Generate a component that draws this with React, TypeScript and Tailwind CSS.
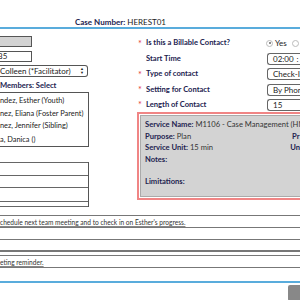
const navy = "text-[#22224f]";

function Label({ text, req }: { text: string; req?: boolean }) {
  return (
    <div className="flex items-center h-[16px] whitespace-nowrap">
      <span className="w-[8px] text-[#e23b3b] text-[9px] leading-none">{req ? "*" : ""}</span>
      <span className={`font-bold text-[7.6px] ${navy}`}>{text}</span>
    </div>
  );
}

function Box({ children }: { children?: React.ReactNode }) {
  return (
    <div className="h-[12px] w-[48px] shrink-0 border border-[#666] rounded-l-[3px] border-r-0 flex items-center pl-[5px] text-[8px] text-[#222] whitespace-nowrap overflow-hidden">
      {children}
    </div>
  );
}

export default function App() {
  return (
    <div className="w-[300px] h-[300px] overflow-hidden bg-white relative" style={{ fontFamily: "Lato, 'Open Sans', sans-serif" }}>
      <div className="pt-[17px] pl-[75px] h-[27px] text-[8px] leading-[10px] text-[#222] whitespace-nowrap">
        <span className={`font-bold ${navy}`}>Case Number:</span> HEREST01
      </div>
      <div className="h-[2px] bg-[#59acdc]" />

      <div className="flex">
        {/* left column */}
        <div className="w-[138px] shrink-0">
          <div className="mt-[7px] h-[11px] w-[32px] bg-[#d3d3d3] border border-[#555] border-l-0" />
          <div className="mt-[4px] h-[11px] w-[32px] border border-[#555] border-l-0 text-[8px] leading-[9px] text-[#222] overflow-hidden whitespace-nowrap">
            <span className="-ml-[2px]">35</span>
          </div>
          <div className="mt-[3px] h-[12px] w-[88px] border border-[#555] border-l-0 rounded-r-[3px] flex items-center justify-between pr-[3px] text-[8px] text-[#222] whitespace-nowrap">
            <span>Colleen (*Facilitator)</span>
            <span className="flex flex-col text-[4px] leading-[4px]">
              <span>▲</span>
              <span>▼</span>
            </span>
          </div>
          <div className={`mt-[2px] h-[13px] flex items-center font-bold text-[7.6px] ${navy} whitespace-nowrap`}>Members: Select</div>
          <div className="h-[55px] w-[89px] border border-[#555] border-l-0 pt-[2px] text-[7.4px] text-[#222] leading-[12.5px] whitespace-nowrap overflow-hidden">
            <div>ndez, Esther (Youth)</div>
            <div>nez, Eliana (Foster Parent)</div>
            <div>nez, Jennifer (Sibling)</div>
            <div className="mt-[1px]">a, Danica ()</div>
          </div>
          <div className="mt-[15px] w-[89px] border-r border-[#555]">
            <div className="h-[13px] border-t border-[#666]" />
            <div className="h-[12px] border-t border-[#666]" />
            <div className="h-[14px] border-t border-[#666]" />
            <div className="h-[6px] border-t border-b border-[#666]" />
          </div>
        </div>

        {/* right column */}
        <div className="flex-1 min-w-0">
          <div className="flex mt-[6px] h-[16px] items-center">
            <div className="w-[128px] shrink-0"><Label text="Is this a Billable Contact?" req /></div>
            <div className="flex items-center text-[8px] text-[#222] whitespace-nowrap">
              <span className="w-[7px] h-[7px] rounded-full border border-[#bbb] flex items-center justify-center">
                <span className="w-[2px] h-[2px] rounded-full bg-[#666]" />
              </span>
              <span className="ml-[2px]">Yes</span>
              <span className="ml-[5px] w-[7px] h-[7px] shrink-0 rounded-full border border-[#bbb]" />
            </div>
          </div>
          <div className="flex items-center h-[14px] mt-[1px]">
            <div className="w-[129px] shrink-0"><Label text="Start Time" /></div>
            <Box>02:00<span className="ml-[3px]">:</span></Box>
          </div>
          <div className="flex items-center h-[14px] mt-[1px]">
            <div className="w-[129px] shrink-0"><Label text="Type of contact" req /></div>
            <Box>Check-In</Box>
          </div>
          <div className="flex items-center h-[15px] mt-[1px]">
            <div className="w-[129px] shrink-0"><Label text="Setting for Contact" req /></div>
            <Box>By Phone</Box>
          </div>
          <div className="flex items-center h-[15px]">
            <div className="w-[129px] shrink-0"><Label text="Length of Contact" req /></div>
            <Box>15</Box>
          </div>
          <div className="-ml-[1px] h-[88px] border-2 border-r-0 border-[#f08585] p-[1px] pr-0">
            <div className="h-full bg-[#d3d3d3] border border-[#aaa] border-r-0 pl-[4px] pt-[3px] text-[7.6px] text-[#333] leading-[11.5px] whitespace-nowrap overflow-hidden">
              <div><span className={`font-bold ${navy}`}>Service Name:</span> M1106 - Case Management (HM)</div>
              <div className="flex"><span className="w-[147px]"><span className={`font-bold ${navy}`}>Purpose:</span> Plan</span><span className={`font-bold ${navy}`}>Pr</span></div>
              <div className="flex"><span className="w-[147px]"><span className={`font-bold ${navy}`}>Service Unit:</span> 15 min</span><span className={`font-bold ${navy}`}>Un</span></div>
              <div className={`font-bold ${navy}`}>Notes:</div>
              <div className={`mt-[11px] font-bold ${navy}`}>Limitations:</div>
            </div>
          </div>
        </div>
      </div>

      <div className="mt-[8px] h-[13px] border-t border-b border-[#777] text-[6.6px] leading-[12px] text-[#333] underline decoration-[#888] whitespace-nowrap overflow-hidden">
        chedule next team meeting and to check in on Esther's progress.
      </div>
      <div className="mt-[11px] h-[13px] border-t border-b-2 border-[#777]" />
      <div className="mt-[3px] h-[13px] border-t border-b border-[#777] text-[6.6px] leading-[12px] text-[#333] underline decoration-[#888] whitespace-nowrap">
        eting reminder.
      </div>
      <div className="mt-[13px] h-[2px] bg-[#59acdc]" />
      <div className="flex justify-end mt-[2px]">
        <div className="w-[12px] h-[16px] bg-[#888] rounded-l-[2px]" />
      </div>
    </div>
  );
}
